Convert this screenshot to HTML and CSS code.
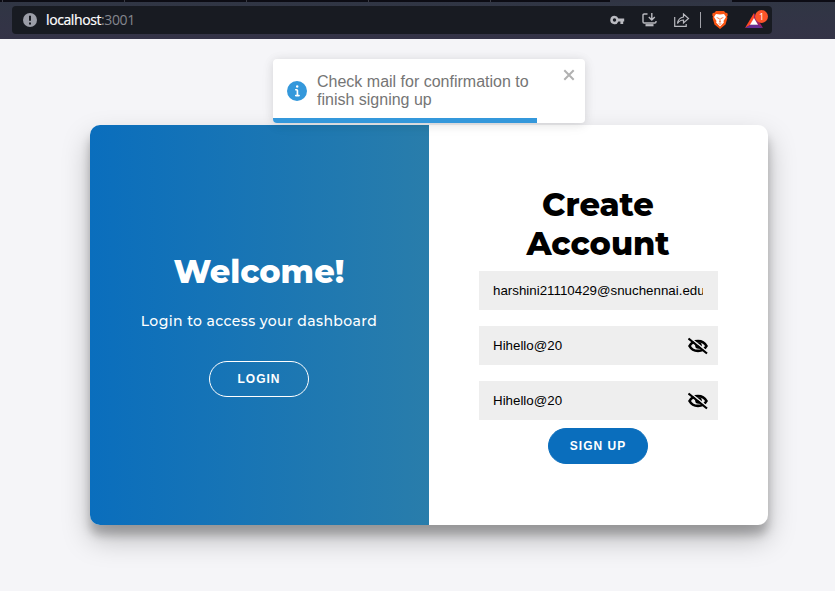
FILE: index.html
```html
<!DOCTYPE html>
<html lang="en">
<head>
<meta charset="utf-8">
<title>Create Account</title>
<link rel="stylesheet" href="styles.css">
</head>
<body>
<header class="browser">
  <div class="tabs"><i></i><i></i><i></i><i></i><i></i><i class="active"></i></div>
  <div class="address">
    <svg class="site-info" width="14" height="14" viewBox="0 0 14 14"><circle cx="7" cy="7" r="7" fill="#9b9da7"/><path d="M7 2.800v5M7 9.500v2" stroke="#181b22" stroke-width="2"/></svg>
    <div class="url">localhost<span>:3001</span></div>
    <svg class="tool-key" width="15" height="10" viewBox="0 0 15 10" fill="#b9bac0"><path fill-rule="evenodd" d="M4.500.8a4.200 4.200 0 1 0 3.900 5.700h2v2.400h2.800V6.500h1V3.600H8.400A4.200 4.200 0 0 0 4.500.8zM4.500 3.300a1.700 1.700 0 1 1 0 3.400 1.700 1.700 0 0 1 0-3.400z"/></svg>
    <svg class="tool-install" width="15" height="14" viewBox="0 0 15 14" fill="none" stroke="#b9bac0" stroke-width="1.400"><path d="M5.500 1H2.200Q1 1 1 2.200v6.600Q1 10 2.200 10h10.600q1.200 0 1.200-1.200V8M9.800 0v6.500M6.800 4l3 3 3-3"/><path d="M3.500 12.200h8" stroke-width="2.200"/></svg>
    <svg class="tool-share" width="16" height="14" viewBox="0 0 16 14" fill="none" stroke="#b9bac0" stroke-width="1.200"><path d="M.7 4v9.300h11.500V11M3.500 10.500C4 6.500 6 4.500 9.500 4V1l5 4.500-5 4.500V7C7 7 5 8 3.500 10.500z"/></svg>
    <b class="divider"></b>
    <svg class="shield" width="16" height="18" viewBox="0 0 16 18"><path d="M4 0h8l1.500 1.800 1.800.2.500 2.300-.8 1.200.4 1.500-1.900 6.500L8 18l-5.500-4.500L.6 7 1 5.500.2 4.300.7 2l1.800-.2z" fill="#fb5412"/><path d="M4 3l4 .6L12 3l2 3-2.500 4 .4 1.400L8 15.500l-3.900-4.100.4-1.400L2 6z" fill="#fff"/><path d="M4 6l3 .9L6.500 8zM12 6l-3 .9.500 1.100zM7.600 7h.8v3.200l.8.700L8 11.600l-1.200-.7.800-.7zM6 12.200l2 .6 2-.6-2 1.500z" fill="#fb5412"/></svg>
    <div class="rewards">
      <svg width="18" height="15" viewBox="0 0 18 15"><path d="M9 0L0 15l5.500-3L9 5.500z" fill="#ff4724"/><path d="M9 0l9 15-5.500-3L9 5.500z" fill="#9e1f63"/><path d="M0 15h18l-5.500-3.500h-7z" fill="#662d91"/><path d="M9 5l4 6.800H5z" fill="#fff"/></svg>
      <span class="badge">1</span>
    </div>
  </div>
</header>

<main>
  <section class="card">
    <div class="welcome">
      <h1>Welcome!</h1>
      <p>Login to access your dashboard</p>
      <button class="ghost">LOGIN</button>
    </div>
    <form class="signup">
      <h1>Create<br>Account</h1>
      <div class="field"><span>harshini21110429@snuchennai.edu</span></div>
      <div class="field"><span>Hihello@20</span><svg class="eye" width="20" height="18" viewBox="0 0 20 18"><path d="M1.500 9C5 2.500 15 2.500 18.500 9 15 15.500 5 15.500 1.500 9z" fill="none" stroke="#000" stroke-width="2.600"/><circle cx="10.500" cy="8.500" r="3.300"/><circle cx="9" cy="7.300" r="1.200" fill="#eee"/><path d="M1 0l19 15.300" stroke="#eee" stroke-width="1.600"/><path d="M.5 1.500l18.500 15" stroke="#000" stroke-width="2.200"/></svg></div>
      <div class="field"><span>Hihello@20</span><svg class="eye" width="20" height="18" viewBox="0 0 20 18"><path d="M1.500 9C5 2.500 15 2.500 18.500 9 15 15.500 5 15.500 1.500 9z" fill="none" stroke="#000" stroke-width="2.600"/><circle cx="10.500" cy="8.500" r="3.300"/><circle cx="9" cy="7.300" r="1.200" fill="#eee"/><path d="M1 0l19 15.300" stroke="#eee" stroke-width="1.600"/><path d="M.5 1.500l18.500 15" stroke="#000" stroke-width="2.200"/></svg></div>
      <button type="button">SIGN UP</button>
    </form>
  </section>
</main>

<aside class="toast">
  <svg class="info" width="20" height="20" viewBox="0 0 24 24" fill="#3498db"><path d="M12 0a12 12 0 1 0 12 12A12.013 12.013 0 0 0 12 0zm.25 5a1.500 1.500 0 1 1-1.500 1.500 1.500 1.500 0 0 1 1.500-1.500zm2.250 13.500h-4a1 1 0 0 1 0-2h.75a.25.25 0 0 0 .25-.25v-4.500a.25.25 0 0 0-.25-.25h-.75a1 1 0 0 1 0-2h1a2 2 0 0 1 2 2v4.750a.25.25 0 0 0 .25.250h.750a1 1 0 1 1 0 2z"/></svg>
  <div class="message">Check mail for confirmation to<br>finish signing up</div>
  <svg class="close" width="12" height="12" viewBox="0 0 12 12"><path d="M1.300 1.300l9.400 9.400M10.700 1.300l-9.400 9.400" stroke="#b1b1b1" stroke-width="2"/></svg>
  <div class="progress"></div>
</aside>
</body>
</html>
```
FILE: styles.css
```css
* { box-sizing: border-box; }
body {
  margin: 0;
  height: 591px;
  overflow: hidden;
  background: #f5f5f8;
  font-family: Montserrat, Inter, sans-serif;
}
.browser {
  height: 39px;
  background: linear-gradient(#303644, #343347);
}
.tabs { display: flex; height: 2px; padding-left: 2px; background: #0c0c14; }
.tabs i { width: 122px; border-left: 1px solid #3a3b44; }
.tabs i.active { margin-left: -2px; background: #303443; border: 0; }
.address {
  display: flex;
  align-items: center;
  width: 760px;
  height: 28px;
  margin: 4px 0 0 12px;
  padding-left: 11px;
  border-radius: 4px;
  background: #181b22;
}
.url {
  width: 564px;
  margin-left: 9px;
  color: #fff;
  font: 14px/20px "Open Sans", "Noto Sans", sans-serif;
  letter-spacing: -.4px;
  -webkit-text-stroke: .2px;
}
.url span { color: #84868e; -webkit-text-stroke: 0; }
.tool-key { width: 15px; }
.tool-install { margin-left: 17px; }
.tool-share { margin-left: 17px; }
.divider { width: 1px; height: 16px; margin-left: 10px; background: #a2a3a9; }
.shield { margin-left: 11px; }
.rewards { position: relative; width: 18px; height: 15px; margin-left: 17px; }
.rewards svg { display: block; }
.badge {
  position: absolute;
  left: 10px;
  top: -3px;
  width: 13px;
  height: 13px;
  border-radius: 50%;
  background: #fb542b;
  color: #fff;
  font: 9px/13px "Open Sans", sans-serif;
  text-align: center;
}

main { padding: 86px 0 0 90px; }
.card {
  display: flex;
  width: 678px;
  height: 400px;
  border-radius: 10px;
  overflow: hidden;
  background: #fff;
  box-shadow: 0 14px 28px rgba(0, 0, 0, .25), 0 10px 10px rgba(0, 0, 0, .22);
}
.welcome, .signup {
  display: flex;
  flex-direction: column;
  align-items: center;
  justify-content: center;
  width: 339px;
  padding: 0 1px 1px 0;
  text-align: center;
}
.welcome { background: linear-gradient(90deg, #0a6ebd, #297dab); color: #fff; }
h1 { margin: 0; font-size: 32px; line-height: 39px; font-weight: 800; }
.signup h1 { margin-bottom: 8px; }
.welcome p { margin: 20px 0 30px; font-size: 14px; font-weight: 500; line-height: 20px; letter-spacing: .4px; }
button {
  width: 100px;
  height: 36px;
  padding: 0;
  border: 1px solid #0a6ebd;
  border-radius: 20px;
  background: #0a6ebd;
  color: #fff;
  font: 700 12px "Liberation Sans", Arial, sans-serif;
  letter-spacing: 1px;
}
button.ghost { border-color: #fff; background: transparent; }
.field {
  display: flex;
  align-items: center;
  width: 239px;
  height: 39px;
  margin-bottom: 16px;
  padding: 0 15px 0 14px;
  background: #eee;
  color: #000;
  font: 13.333px "Liberation Sans", Arial, sans-serif;
  text-align: left;
}
.signup .field { margin-right: -1px; }
.field span { flex: 1; min-width: 0; overflow: hidden; white-space: nowrap; }
.field .eye { margin: 0 -5px 0 0; }
.field:last-of-type { margin-bottom: 8px; }

.toast {
  position: absolute;
  left: 273px;
  top: 59px;
  display: flex;
  width: 312px;
  height: 64px;
  padding: 14px;
  border-radius: 4px;
  overflow: hidden;
  background: #fff;
  box-shadow: 0 1px 10px rgba(0, 0, 0, .1), 0 2px 15px rgba(0, 0, 0, .05);
  color: #757575;
  font: 16px/18px "Liberation Sans", Arial, sans-serif;
}
.info { margin-top: 8px; }
.message { width: 236px; margin-left: 10px; white-space: nowrap; }
.close { margin: -4px -6px 0 10px; flex: none; }
.info, .message { flex: none; }
.progress {
  position: absolute;
  left: 0;
  bottom: 0;
  width: 264px;
  height: 5px;
  background: #3498db;
}
```
